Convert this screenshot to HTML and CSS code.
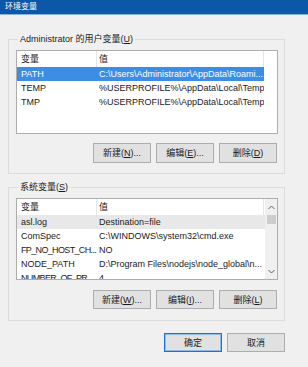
FILE: index.html
```html
<!DOCTYPE html>
<html lang="zh-CN">
<head>
<meta charset="utf-8">
<title>环境变量</title>
<link rel="stylesheet" href="styles.css">
</head>
<body>
<div class="dialog">
  <div class="titlebar">环境变量</div>

  <fieldset class="group group-user">
    <legend>Administrator 的用户变量(<u>U</u>)</legend>
    <div class="list list-user">
      <div class="list-head">
        <div class="cell c1">变量</div>
        <div class="cell c2">值</div>
        <div class="cell c3"></div>
      </div>
      <div class="list-body">
        <div class="row selected"><div class="cell c1">PATH</div><div class="cell c2">C:\Users\Administrator\AppData\Roami...</div></div>
        <div class="row"><div class="cell c1">TEMP</div><div class="cell c2">%USERPROFILE%\AppData\Local\Temp</div></div>
        <div class="row"><div class="cell c1">TMP</div><div class="cell c2">%USERPROFILE%\AppData\Local\Temp</div></div>
      </div>
    </div>
    <div class="btn-row">
      <button class="btn">新建(<u>N</u>)...</button>
      <button class="btn">编辑(<u>E</u>)...</button>
      <button class="btn">删除(<u>D</u>)</button>
    </div>
  </fieldset>

  <fieldset class="group group-sys">
    <legend>系统变量(<u>S</u>)</legend>
    <div class="list list-sys">
      <div class="list-main">
        <div class="list-head">
          <div class="cell c1">变量</div>
          <div class="cell c2">值</div>
        </div>
        <div class="list-body">
          <div class="row hover"><div class="cell c1">asl.log</div><div class="cell c2">Destination=file</div></div>
          <div class="row"><div class="cell c1">ComSpec</div><div class="cell c2">C:\WINDOWS\system32\cmd.exe</div></div>
          <div class="row"><div class="cell c1 tight">FP_NO_HOST_CH...</div><div class="cell c2">NO</div></div>
          <div class="row"><div class="cell c1">NODE_PATH</div><div class="cell c2">D:\Program Files\nodejs\node_global\n...</div></div>
          <div class="row"><div class="cell c1 tight">NUMBER_OF_PR...</div><div class="cell c2">4</div></div>
        </div>
      </div>
      <div class="scrollbar">
        <div class="sb-arrow">
          <svg width="7" height="5" viewBox="0 0 7 5"><path d="M0.5 4 L3.5 1 L6.5 4" fill="none" stroke="#606060" stroke-width="1"/></svg>
        </div>
        <div class="sb-thumb"></div>
        <div class="sb-track"></div>
        <div class="sb-arrow">
          <svg width="7" height="5" viewBox="0 0 7 5"><path d="M0.5 1 L3.5 4 L6.5 1" fill="none" stroke="#606060" stroke-width="1"/></svg>
        </div>
      </div>
    </div>
    <div class="btn-row">
      <button class="btn">新建(<u>W</u>)...</button>
      <button class="btn">编辑(<u>I</u>)...</button>
      <button class="btn">删除(<u>L</u>)</button>
    </div>
  </fieldset>

  <div class="footer">
    <button class="btn btn-default">确定</button>
    <button class="btn">取消</button>
  </div>
</div>
</body>
</html>
```

FILE: styles.css
```css
* { box-sizing: border-box; }

html, body {
  margin: 0;
  padding: 0;
  background: #f0f0f0;
}

body {
  font-family: "Liberation Sans", "Noto Sans CJK SC", sans-serif;
  font-size: 9px;
  color: #1a1a1a;
}

.dialog {
  width: 308px;
  height: 367px;
  display: flex;
  flex-direction: column;
  overflow: hidden;
}

.titlebar {
  height: 15px;
  background: #0b58a9;
  border-bottom: 1px solid #86b3e2;
  color: #ffffff;
  font-size: 8px;
  line-height: 14px;
  padding-left: 5px;
}

.group {
  margin: 18px 23px 0 8px;
  padding: 5px 6px 10px 7px;
  border: 1px solid #dcdcdc;
  min-width: 0;
}

.group legend {
  padding: 0 2px;
  margin-left: 2px;
  line-height: 12px;
  height: 12px;
}

.group-sys {
  margin-top: 7px;
  padding-bottom: 11px;
}

.list {
  border: 1px solid #adadad;
  background: #ffffff;
  overflow: hidden;
}

.list-user { height: 84px; }

.list-sys {
  height: 82px;
  display: flex;
}

.list-main {
  flex: 1;
  overflow: hidden;
}

.list-head {
  display: flex;
  height: 16px;
  line-height: 16px;
}

.list-head .cell {
  border-right: 1px solid #e5e5e5;
}

.list-head .c3 {
  width: 12px;
  border-right: none;
}

.row {
  display: flex;
  height: 14px;
  line-height: 14px;
}

.cell {
  white-space: nowrap;
  overflow: hidden;
}

.c1 {
  width: 80px;
  flex: none;
  padding-left: 4px;
}

.c1.tight {
  letter-spacing: -0.65px;
}

.c2 {
  width: 167px;
  flex: none;
  padding-left: 2px;
}

.row.selected {
  background: #3b8ee4;
  color: #ffffff;
}

.list-user .row.selected { width: 247px; }

.row.hover {
  background: #e8e8e8;
}

.scrollbar {
  width: 12px;
  flex: none;
  background: #f0f0f0;
  display: flex;
  flex-direction: column;
  align-items: center;
}

.sb-arrow {
  height: 16px;
  width: 12px;
  display: flex;
  align-items: center;
  justify-content: center;
}

.sb-thumb {
  width: 9px;
  height: 9px;
  background: #cdcdcd;
}

.sb-track { flex: 1; }

.btn-row {
  display: flex;
  justify-content: flex-end;
  gap: 5px;
  margin-top: 9px;
  padding-right: 1px;
}

.group-sys .btn-row { margin-top: 10px; }

.btn {
  width: 58px;
  height: 20px;
  padding: 0;
  margin: 0;
  background: #e1e1e1;
  border: 1px solid #adadad;
  font-family: inherit;
  font-size: 9px;
  color: #1a1a1a;
  line-height: 18px;
}

.group-sys .btn { height: 19px; }

.footer {
  display: flex;
  justify-content: flex-end;
  gap: 5px;
  margin-top: 12px;
  padding-right: 23px;
}

.footer .btn { height: 19px; }

.btn-default {
  border: 1px solid #1874d0;
  box-shadow: inset 0 0 0 1px #8fbbe8;
}
```
